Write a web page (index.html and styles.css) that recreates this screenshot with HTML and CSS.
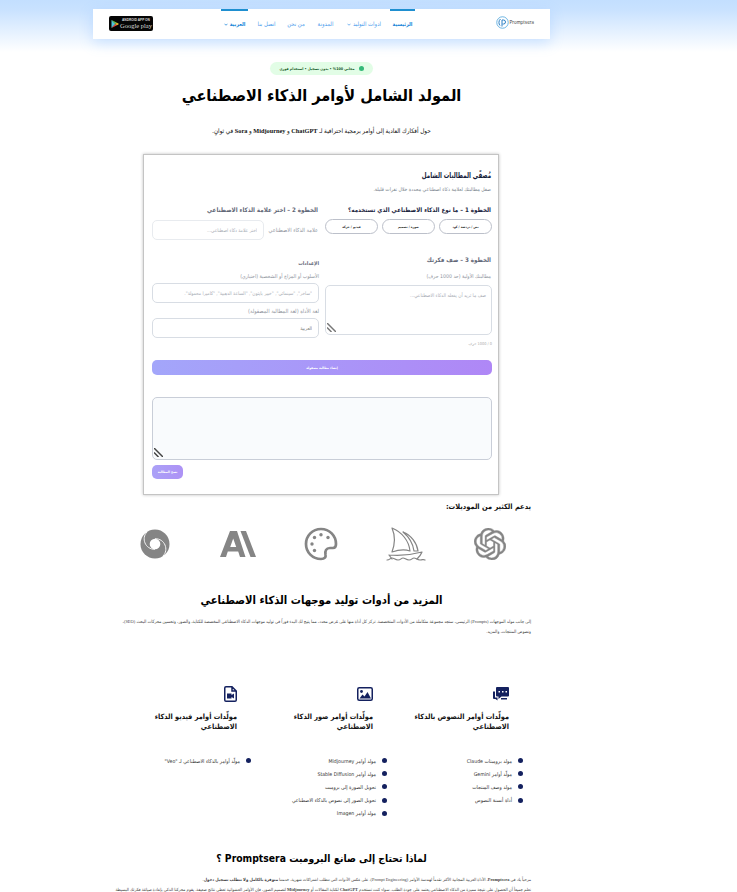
FILE: index.html
```
<!DOCTYPE html>
<html lang="ar" dir="rtl">
<head>
    <meta charset="UTF-8">
    <meta name="viewport" content="width=device-width, initial-scale=1.0">
    <title>Promptsera</title>
    <link rel="stylesheet" href="styles.css">
</head>
<body>
<div class="page">
    <header class="header">
        <a class="logo" href="#">
            <svg width="13" height="13" viewBox="0 0 26 26" fill="none" stroke="#4aa3dc" stroke-width="1.6">
                <circle cx="13" cy="13" r="11.5"/>
                <path d="M12 21V8h3a4 4 0 0 1 0 8h-2M9 6c-4 3-4 10-1 13" stroke="#2b7fc4" stroke-width="2"/>
            </svg>
            <span>Promptsera</span>
        </a>
        <nav class="menu">
            <a class="home active" href="#">الرئيسية</a>
            <a class="tools" href="#">ادوات التوليد <svg class="chevron" viewBox="0 0 8 5"><path d="M1 1l3 3 3-3"/></svg></a>
            <a class="blog" href="#">المدونة</a>
            <a class="about" href="#">من نحن</a>
            <a class="contact" href="#">اتصل بنا</a>
            <a class="lang active" href="#">العربية <svg class="chevron" viewBox="0 0 8 5"><path d="M1 1l3 3 3-3"/></svg></a>
        </nav>
        <a class="play" href="#" dir="ltr">
            <svg width="8" height="8" viewBox="0 0 16 16">
                <path d="M1 0l8 8-8 8z" fill="#4fc3d9"/>
                <path d="M1 0l11 5.5L8.500 8z" fill="#6cc24a"/>
                <path d="M1 16l11-5.500L8.500 8z" fill="#e5473d"/>
                <path d="M12 5.500L16 8l-4 2.500L8.500 8z" fill="#f6c12d"/>
            </svg>
            <span class="play-text"><small>ANDROID APP ON</small><b>Google play</b></span>
        </a>
    </header>

    <section class="hero">
        <div class="badge"><i></i><span>مجاني 100% • بدون تسجيل • استخدام فوري</span></div>
        <h1>المولد الشامل لأوامر الذكاء الاصطناعي</h1>
        <p>حول أفكارك العادية إلى أوامر برمجية احترافية لـ <b>ChatGPT</b> و <b>Midjourney</b> و <b>Sora</b> في ثوانٍ.</p>
    </section>

    <section class="card">
        <h2>مُصفّي المطالبات الشامل</h2>
        <p class="card-desc">صقل مطالبتك لعلامة ذكاء اصطناعي محددة خلال نقرات قليلة.</p>

        <div class="row steps">
            <div class="col step-one">
                <h3>الخطوة 1 – ما نوع الذكاء الاصطناعي الذي تستخدمه؟</h3>
                <div class="pills">
                    <button>نص / دردشة / كود</button>
                    <button>صورة / تصميم</button>
                    <button>فيديو / حركة</button>
                </div>
            </div>
            <div class="col step-two muted">
                <h3>الخطوة 2 – اختر علامة الذكاء الاصطناعي</h3>
                <div class="brand-row">
                    <label>علامة الذكاء الاصطناعي</label>
                    <input class="field" type="text" placeholder="اختر علامة ذكاء اصطناعي...">
                </div>
            </div>
        </div>

        <div class="row details muted">
            <div class="col idea">
                <h3>الخطوة 3 – صف فكرتك</h3>
                <label>مطالبتك الأولية (حد 1000 حرف)</label>
                <div class="area">
                    <textarea placeholder="صف ما تريد أن يفعله الذكاء الاصطناعي..."></textarea>
                    <svg class="grip" viewBox="0 0 10 10"><path d="M0 0l10 10M0 5l5 5"/></svg>
                </div>
                <div class="counter">0 / 1000 حرف</div>
            </div>
            <div class="col settings">
                <h4>الإعدادات</h4>
                <label>الأسلوب أو المزاج أو الشخصية (اختياري)</label>
                <input class="field" type="text" placeholder="&quot;ساخر&quot;, &quot;سينمائي&quot;, &quot;خبير بايثون&quot;, &quot;الساعة الذهبية&quot;, &quot;كاميرا محمولة&quot;.">
                <label class="second">لغة الأداة (لغة المطالبة المصقولة)</label>
                <input class="field value" type="text" value="العربية">
            </div>
        </div>

        <button class="generate">إنشاء مطالبة مصقولة</button>
        <div class="area result">
            <textarea readonly></textarea>
            <svg class="grip" viewBox="0 0 10 10"><path d="M0 0l10 10M0 5l5 5"/></svg>
        </div>
        <button class="copy">نسخ المطالبة</button>
    </section>

    <section class="models">
        <h3>يدعم الكثير من الموديلات:</h3>
        <div class="model-logos">
            <svg width="32" height="32" viewBox="0 0 24 24" fill="#858585" stroke="#858585" stroke-width=".3"><path d="M22.2819 9.8211a5.9847 5.9847 0 0 0-.5157-4.9108 6.0462 6.0462 0 0 0-6.5098-2.9A6.0651 6.0651 0 0 0 4.9807 4.1818a5.9847 5.9847 0 0 0-3.9977 2.9 6.0462 6.0462 0 0 0 .7427 7.0966 5.98 5.98 0 0 0 .511 4.9107 6.051 6.051 0 0 0 6.5146 2.9001A5.9847 5.9847 0 0 0 13.2599 24a6.0557 6.0557 0 0 0 5.7718-4.2058 5.9894 5.9894 0 0 0 3.9977-2.9001 6.0557 6.0557 0 0 0-.7475-7.0729zm-9.022 12.6081a4.4755 4.4755 0 0 1-2.8764-1.0408l.1419-.0804 4.7783-2.7582a.7948.7948 0 0 0 .3927-.6813v-6.7369l2.02 1.1686a.071.071 0 0 1 .038.052v5.5826a4.504 4.504 0 0 1-4.4945 4.4944zm-9.6607-4.1254a4.4708 4.4708 0 0 1-.5346-3.0137l.142.0852 4.783 2.7582a.7712.7712 0 0 0 .7806 0l5.8428-3.3685v2.3324a.0804.0804 0 0 1-.0332.0615L9.74 19.9502a4.4992 4.4992 0 0 1-6.1408-1.6464zM2.3408 7.8956a4.485 4.485 0 0 1 2.3655-1.9728V11.6a.7664.7664 0 0 0 .3879.6765l5.8144 3.3543-2.0201 1.1685a.0757.0757 0 0 1-.071 0l-4.8303-2.7865A4.504 4.504 0 0 1 2.3408 7.872zm16.5963 3.8558L13.1038 8.364 15.1192 7.2a.0757.0757 0 0 1 .071 0l4.8303 2.7913a4.4944 4.4944 0 0 1-.6765 8.1042v-5.6772a.79.79 0 0 0-.407-.667zm2.0107-3.0231l-.142-.0852-4.7735-2.7818a.7759.7759 0 0 0-.7854 0L9.409 9.2297V6.8974a.0662.0662 0 0 1 .0284-.0615l4.8303-2.7866a4.4992 4.4992 0 0 1 6.6802 4.66zM8.3065 12.863l-2.02-1.1638a.0804.0804 0 0 1-.038-.0567V6.0742a4.4992 4.4992 0 0 1 7.3757-3.4537l-.142.0805L8.704 5.459a.7948.7948 0 0 0-.3927.6813zm1.0976-2.3654l2.602-1.4998 2.6069 1.4998v2.9994l-2.5974 1.4997-2.6067-1.4997Z"/></svg>
            <svg width="40" height="34" viewBox="0 0 40 34" fill="none" stroke="#858585" stroke-width="1.2" stroke-linejoin="round" stroke-linecap="round">
                <path d="M6 1c10 4 17 13 18 23-6-2-12-1-18 1 3-8 3-17 0-24z"/>
                <path d="M17 5c8 3 14 11 15 19l-4 0C27 16 23 10 17 5z"/>
                <path d="M3 28c11 1 22 0 33-3-1 3-3 5-5 7M3 28l3 4"/>
                <path d="M1 33c3 0 3-2 5-2s3 2 6 2 3-2 5-2 3 2 6 2 3-2 5-2 3 2 6 2 3-1 5 0"/>
            </svg>
            <svg class="palette" width="34" height="34" viewBox="0 0 34 34" fill="#858585">
                <path d="M17 2C8.500 2 2 8.700 2 17s6.500 15 15 15c4 0 5-2 4.500-4.500C21 24 22 21 26 21h3c2 0 3-2 3-4C32 8.700 25.500 2 17 2z" fill="none" stroke="#858585" stroke-width="2.700"/>
                <circle cx="8" cy="17" r="1.700"/><circle cx="10.500" cy="10.500" r="1.700"/><circle cx="17" cy="7.800" r="1.700"/><circle cx="24" cy="10.500" r="1.700"/><circle cx="10.500" cy="23.500" r="1.700"/>
            </svg>
            <svg class="anthropic" width="36" height="26" viewBox="0 0 36 26" fill="#858585">
                <path fill-rule="evenodd" d="M10 0h7l8.500 26H20l-1.800-5.500H7.800L6 26H0zM13.200 7.500l-3 8.500h6z"/>
                <path d="M20.500 0h5.500l10 26h-5.500z"/>
            </svg>
            <svg width="30" height="30" viewBox="0 0 30 30">
                <circle cx="15" cy="15" r="14.500" fill="#858585"/>
                <circle cx="15" cy="15" r="5.300" fill="#fff"/>
                <path d="M7 3C1 9 5 20.500 15 20.300M23 27c6-6 2-17.500-8-17.300" fill="none" stroke="#fff" stroke-width=".9"/>
            </svg>
        </div>
    </section>

    <section class="more">
        <h2>المزيد من أدوات توليد موجهات الذكاء الاصطناعي</h2>
        <p>إلى جانب مولد الموجهات (Prompts) الرئيسي، ستجد مجموعة متكاملة من الأدوات المتخصصة. تركز كل أداة منها على غرض محدد، مما يتيح لك البدء فوراً في توليد موجهات الذكاء الاصطناعي المخصصة للكتابة، والصور، وتحسين محركات البحث (SEO)،</p>
        <p>ونصوص المنتجات، والمزيد.</p>
    </section>

    <section class="generators">
        <div class="gen">
            <svg width="16" height="14" viewBox="0 0 32 28" fill="#14215f">
                <path fill-rule="evenodd" d="M8 0h22q2 0 2 2v15q0 2-2 2H17l-6 5v-5H8q-2 0-2-2V2q0-2 2-2zm3 8v3h3V8zm7 0v3h3V8zm7 0v3h3V8z"/>
                <path d="M0 9h4v12h5v6l-4-3H2q-2 0-2-2z"/><path d="M16 22h12v3H16z"/>
            </svg>
            <h3>مولّدات أوامر النصوص بالذكاء<br>الاصطناعي</h3>
            <ul>
                <li>مولد برومبتات Claude</li>
                <li>مولّد أوامر Gemini</li>
                <li>مولد وصف المنتجات</li>
                <li>أداة أنسنة النصوص</li>
            </ul>
        </div>
        <div class="gen">
            <svg width="16" height="14" viewBox="0 0 32 28">
                <rect x="1.500" y="1.500" width="29" height="25" rx="3" fill="none" stroke="#14215f" stroke-width="3"/>
                <circle cx="9" cy="9" r="2.800" fill="#14215f"/><path d="M5 23l6-8 4 4 6-9 7 13z" fill="#14215f"/>
            </svg>
            <h3>مولّدات أوامر صور الذكاء<br>الاصطناعي</h3>
            <ul>
                <li>مولد أوامر Midjourney</li>
                <li>مولد أوامر Stable Diffusion</li>
                <li>تحويل الصورة إلى برومبت</li>
                <li>تحويل الصور إلى نصوص بالذكاء الاصطناعي</li>
                <li>مولد أوامر Imagen</li>
            </ul>
        </div>
        <div class="gen">
            <svg width="13" height="16" viewBox="0 0 26 32">
                <path d="M4 1.500h12l8.500 8.500v18q0 2.500-2.500 2.500H4q-2.500 0-2.500-2.500V4Q1.500 1.500 4 1.500zM16 2v8h8" fill="none" stroke="#14215f" stroke-width="3"/>
                <path d="M6 15h9v3l5-3v10l-5-3v3H6z" fill="#14215f"/>
            </svg>
            <h3>مولّدات أوامر فيديو الذكاء<br>الاصطناعي</h3>
            <ul>
                <li>مولّد أوامر بالذكاء الاصطناعي لـ "Veo"</li>
            </ul>
        </div>
    </section>

    <section class="why">
        <h2>لماذا تحتاج إلى صانع البرومبت Promptsera ؟</h2>
        <p>مرحباً بك في <b>Promptsera</b>، الأداة العربية المجانية الأكثر تقدماً لهندسة الأوامر (Prompt Engineering). على عكس الأدوات التي تتطلب اشتراكات شهرية، خدمتنا <b>متوفرة بالكامل ولا تتطلب تسجيل دخول</b>.</p>
        <p class="wide">نعلم جميعاً أن الحصول على نتيجة مميزة من الذكاء الاصطناعي يعتمد على جودة الطلب. سواء كنت تستخدم <b>ChatGPT</b> لكتابة المقالات أو <b>Midjourney</b> لتصميم الصور، فإن الأوامر العشوائية تعطي نتائج ضعيفة. يقوم محركنا الذكي بإعادة صياغة فكرتك البسيطة</p>
    </section>
</div>
</body>
</html>
```
FILE: styles.css
```
* {
    box-sizing: border-box;
}
body {
    margin: 0;
    height: 892px;
    overflow: hidden;
    background: linear-gradient(to bottom, #c3dfff 0, #c9e2ff 10px, #fff 52px) no-repeat #fff;
    font-family: "DejaVu Sans Condensed", "DejaVu Sans", sans-serif;
    font-stretch: condensed;
    color: #111;
    direction: ltr;
}
.page {
    width: 643px;
    height: 892px;
    overflow: hidden;
    direction: rtl;
}
h1, h2, h3, h4, p, ul {
    margin: 0;
    padding: 0;
    white-space: nowrap;
}
a {
    text-decoration: none;
}
button, input, textarea {
    font-family: inherit;
    font-stretch: inherit;
    display: block;
    margin: 0;
    padding: 0;
    white-space: nowrap;
}

/* header */
.header {
    display: flex;
    width: 457px;
    height: 30px;
    margin: 9px 93px 0;
    background: #fff;
    box-shadow: 0 4px 14px rgba(100, 170, 255, 0.28);
}
.logo {
    display: flex;
    flex-direction: row-reverse;
    align-items: center;
    justify-content: flex-end;
    width: 38px;
    height: 13px;
    margin: 7px 16px 0 0;
    color: #444;
    font: 4.5px Inter, sans-serif;
}
.logo svg {
    flex-shrink: 0;
}
.menu {
    display: flex;
    margin-right: 81px;
}
.menu a {
    display: flex;
    align-items: center;
    justify-content: center;
    gap: 2px;
    height: 30px;
    padding-bottom: 2px;
    border-top: 2px solid transparent;
    white-space: nowrap;
    color: #4a9bec;
    font-size: 5.9px;
}
.menu .active {
    border-color: #1f8fd0;
    color: #1583d8;
    font-size: 5.3px;
    font-weight: bold;
}
.menu .home { width: 25px; }
.menu .tools { width: 52px; }
.menu .blog { width: 25px; }
.menu .about { width: 34px; }
.menu .contact { width: 25px; }
.menu .lang { width: 27px; margin-right: 6px; }
.chevron {
    width: 4px;
    height: 3px;
    fill: none;
    stroke: currentColor;
    stroke-width: 1.5;
}
.play {
    display: flex;
    align-items: center;
    gap: 1px;
    width: 44px;
    height: 15px;
    margin: 7px auto 0 16px;
    padding-left: 2px;
    border-radius: 2px;
    background: #050505;
    color: #ddd;
}
.play-text {
    display: flex;
    flex-direction: column;
    align-items: center;
    white-space: nowrap;
}
.play small {
    font: bold 3.2px/4px "Liberation Sans", sans-serif;
}
.play b {
    font: 6.5px/8px "Liberation Serif", serif;
}

/* hero */
.hero {
    display: flex;
    flex-direction: column;
    align-items: center;
}
.badge {
    display: flex;
    align-items: center;
    justify-content: center;
    gap: 4px;
    width: 103px;
    height: 13px;
    margin-top: 23px;
    border-radius: 7px;
    background: #e2fde6;
    color: #152;
    font-size: 3.7px;
    font-weight: bold;
    white-space: nowrap;
}
.badge i {
    width: 5px;
    height: 5px;
    border-radius: 50%;
    background: #35b978;
}
.hero h1 {
    height: 30px;
    margin-top: 6px;
    color: #000;
    font-size: 16.2px;
    line-height: 30px;
}
.hero p {
    height: 12px;
    margin-top: 14px;
    font: 6.3px/12px "Liberation Serif", "DejaVu Sans Condensed", "DejaVu Sans", serif;
}

/* generator card */
.card {
    width: 356px;
    height: 341px;
    margin: 17px 144px 0 0;
    padding: 13px 6px 0 8px;
    border: 1px solid #c4c4c4;
    box-shadow: 0 0 3px rgba(0, 0, 0, 0.25);
    background: #fff;
}
.card h2 {
    height: 15px;
    padding-right: 1px;
    color: #151c3b;
    font-size: 8.2px;
    line-height: 15px;
    transform: scaleX(0.75);
    transform-origin: right;
}
.card-desc {
    height: 12px;
    padding-right: 1px;
    color: #777f8b;
    font-size: 5.1px;
    line-height: 12px;
}
.row {
    display: flex;
    justify-content: space-between;
}
.col {
    width: 167px;
}
.col h3 {
    height: 12px;
    padding-right: 1px;
    color: #1b2440;
    font-size: 6.2px;
    line-height: 12px;
}
.muted h3, .muted h4 {
    color: #5f6676;
}
.muted label {
    color: #8f949d;
    font-size: 5.2px;
    white-space: nowrap;
}
.steps {
    height: 50px;
    margin-top: 9px;
}
.pills {
    display: flex;
    justify-content: space-between;
    margin-top: 3px;
}
.pills button {
    width: 53px;
    height: 15px;
    border: 1px solid #bcc0ca;
    border-radius: 8px;
    background: #fff;
    color: #333;
    font-size: 3.3px;
    font-weight: bold;
}
.brand-row {
    display: flex;
    align-items: center;
    justify-content: space-between;
    margin-top: 4px;
    padding-right: 1px;
}
.brand-row label {
    font-size: 5.6px;
}
.brand-row .field {
    width: 112px;
    border-color: #e8ebef;
}
.field {
    width: 167px;
    height: 20px;
    padding: 0 6px;
    border: 1px solid #d8dde4;
    border-radius: 5px;
    background: #fff;
    color: #777;
    font-size: 4.8px;
}
.field::placeholder, .area textarea::placeholder {
    color: #a8adb5;
}
.details {
    height: 106px;
}
.idea label {
    display: block;
    height: 10px;
    margin-top: 5px;
    padding-right: 1px;
    line-height: 10px;
}
.area {
    position: relative;
}
.area textarea {
    width: 167px;
    height: 50px;
    padding: 6px 5px;
    border: 1px solid #d8dde4;
    border-radius: 5px;
    resize: none;
    background: #fff;
    font-size: 4.9px;
}
.idea .area {
    margin-top: 4px;
}
.grip {
    position: absolute;
    left: 2px;
    bottom: 3px;
    width: 9px;
    height: 9px;
    fill: none;
    stroke: #777;
    stroke-width: 1.6;
}
.counter {
    margin-top: 4px;
    color: #aaa;
    font-size: 3.9px;
    line-height: 10px;
}
.settings h4 {
    height: 10px;
    margin-top: 4px;
    font-size: 5.1px;
    line-height: 10px;
}
.settings label {
    display: block;
    height: 10px;
    margin-top: 3px;
    line-height: 10px;
}
.settings .field {
    margin-top: 2px;
}
.settings .second {
    margin-top: 3px;
    font-size: 5.6px;
}
.generate {
    width: 340px;
    height: 15px;
    border: 0;
    border-radius: 5px;
    background: linear-gradient(to right, #a3a6fa, #af87f6);
    color: #fff;
    font-size: 3.3px;
    font-weight: bold;
}
.result {
    margin-top: 22px;
}
.result textarea {
    width: 340px;
    height: 63px;
    border-color: #c9ced8;
    background: #f9fbfd;
}
.result .grip {
    stroke: #444;
}
.copy {
    width: 31px;
    height: 14px;
    margin: 5px auto 0 0;
    border: 0;
    border-radius: 5px;
    background: linear-gradient(to right, #aba1f7, #ad92f5);
    color: #fff;
    font-size: 3.3px;
    font-weight: bold;
}

/* supported models */
.models h3 {
    height: 16px;
    margin: 4px 112px 0 0;
    font-size: 7.4px;
    line-height: 16px;
}
.model-logos {
    display: flex;
    justify-content: space-between;
    align-items: center;
    width: 366px;
    height: 36px;
    margin: 11px 137px 0 0;
}
.palette, .anthropic {
    transform: translateX(1px);
}

/* text sections */
.more h2, .why h2 {
    height: 22px;
    color: #000;
    line-height: 22px;
    text-align: center;
}
.more h2 {
    margin-top: 28px;
    margin-bottom: 5px;
    font-size: 11.2px;
}
.more p, .why p {
    height: 10px;
    margin-right: 112px;
    color: #444;
    font: 4.46px/10px "Liberation Serif", "DejaVu Sans Condensed", "DejaVu Sans", serif;
}

/* generator lists */
.generators {
    display: flex;
    height: 161px;
    margin: 49px 134px 0 0;
}
.gen {
    width: 136px;
}
.gen svg {
    display: block;
    height: 16px;
}
.gen h3 {
    height: 20px;
    margin-top: 10px;
    font-size: 7.3px;
    line-height: 10px;
}
.gen ul {
    margin: 22px -14px 0 0;
    list-style: none;
}
.gen li {
    display: flex;
    align-items: center;
    gap: 6px;
    height: 13.2px;
    color: #333;
    font-size: 5.2px;
}
.gen li::before {
    content: '';
    width: 5px;
    height: 5px;
    border-radius: 50%;
    background: #14215f;
}
.why h2 {
    margin-bottom: 6px;
    font-size: 10.3px;
}
.why p {
    font-size: 4.3px;
}
.why .wide {
    font-size: 4.4px;
}
```
